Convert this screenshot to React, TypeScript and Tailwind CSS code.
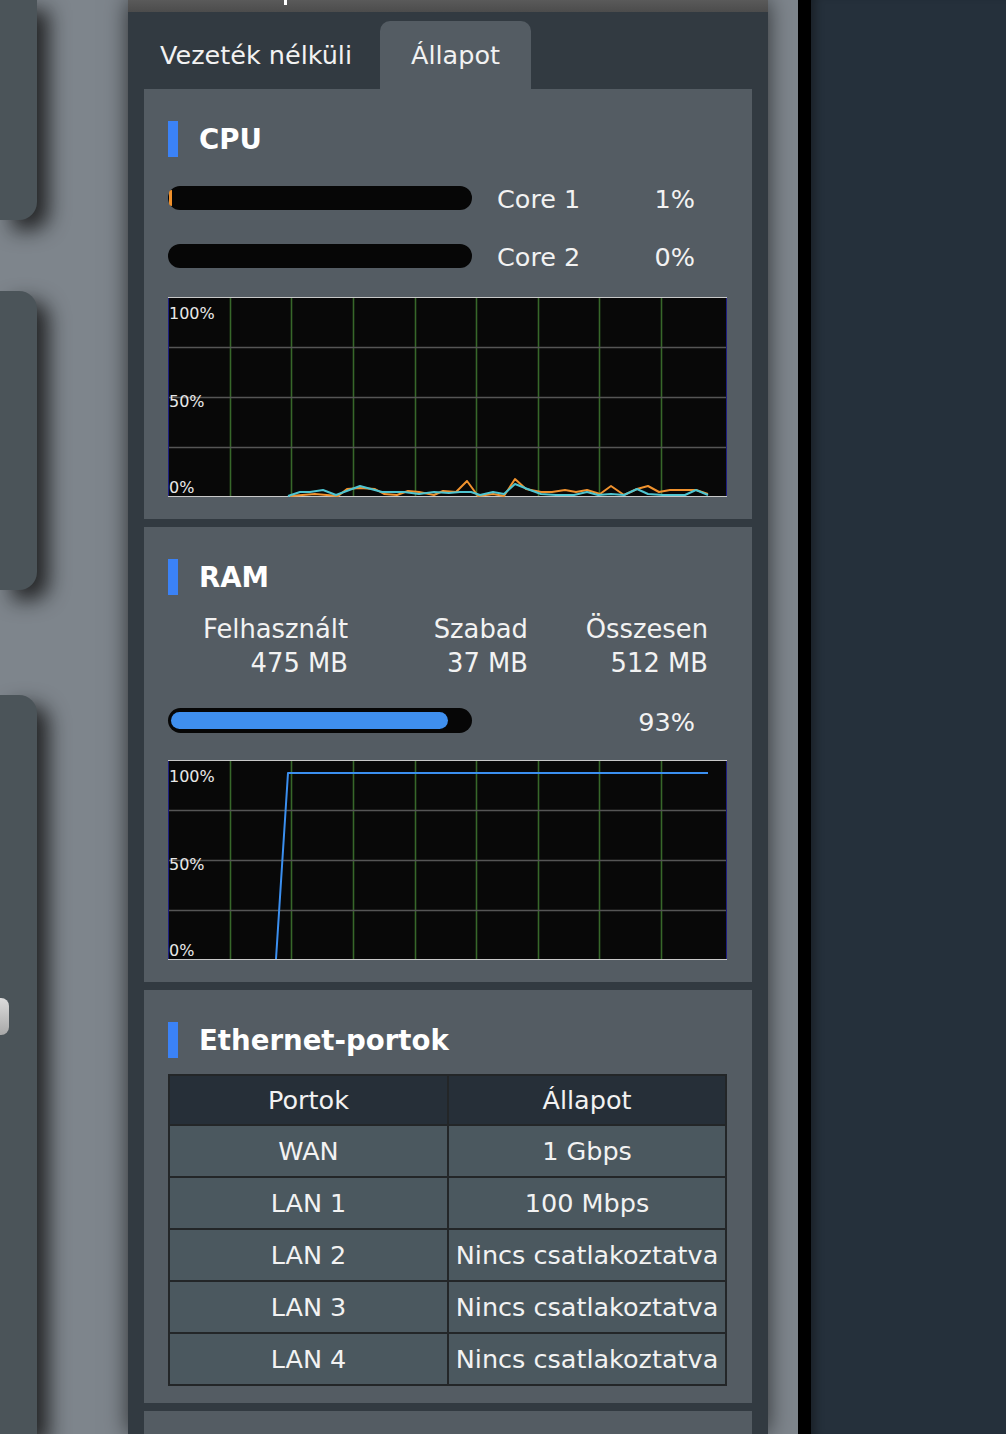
import React from 'react'

const FONT = { fontFamily: '"DejaVu Sans", Verdana, sans-serif' }

// wartości wykresów (współrzędne względem wykresu 559x200)
const cpuCyan: [number, number][] = [
  [120, 199], [132, 195], [142, 195], [155, 193], [168, 198], [192, 189], [214, 195], [236, 195],
  [251, 197], [266, 195], [281, 196], [292, 195], [303, 195], [312, 198], [325, 195], [336, 197],
  [347, 187], [362, 193], [373, 197], [388, 198], [406, 198], [419, 195], [430, 198], [443, 197],
  [456, 198], [469, 192], [480, 197], [495, 198], [517, 198], [528, 193], [540, 198],
]
const cpuOrange: [number, number][] = [
  [122, 199], [147, 197], [170, 199], [179, 192], [192, 191], [207, 192], [216, 197], [229, 198],
  [240, 194], [251, 195], [266, 198], [275, 194], [288, 195], [299, 184], [310, 199], [325, 197],
  [336, 199], [347, 182], [358, 192], [373, 195], [384, 195], [397, 193], [408, 195], [419, 193],
  [432, 197], [443, 189], [456, 198], [469, 192], [480, 189], [491, 195], [502, 193], [528, 193],
  [540, 197],
]
const ramLine: [number, number][] = [
  [108, 199], [120, 13], [540, 13],
]

const pts = (p: [number, number][]) => p.map(([x, y]) => `${x},${y}`).join(' ')

function Grafikon({ vonalak }: { vonalak: { pontok: [number, number][]; szin: string }[] }) {
  const fuggoleges = [62, 123, 185, 247, 308, 370, 431, 493]
  return (
    <svg width="559" height="200" viewBox="0 0 559 200" className="block">
      <rect x="0" y="0" width="559" height="200" fill="#080808" />
      {fuggoleges.map(x => (
        <line key={x} x1={x + 0.5} y1="0" x2={x + 0.5} y2="200" stroke="#37672a" strokeWidth="1.6" />
      ))}
      {[50, 100, 150].map(y => (
        <line key={y} x1="0" y1={y + 0.5} x2="559" y2={y + 0.5} stroke="#555555" strokeWidth="1.6" />
      ))}
      <line x1="0.5" y1="0" x2="0.5" y2="200" stroke="#1d1d80" />
      <line x1="558.5" y1="0" x2="558.5" y2="200" stroke="#1d1d80" />
      <line x1="0" y1="0.5" x2="559" y2="0.5" stroke="#c8c8c8" />
      <line x1="0" y1="199.5" x2="559" y2="199.5" stroke="#c8c8c8" />
      {vonalak.map((v, i) => (
        <polyline key={i} points={pts(v.pontok)} fill="none" stroke={v.szin} strokeWidth="2" strokeLinejoin="round" />
      ))}
      <text x="1" y="22" fill="#e8e8e8" fontSize="16" style={FONT}>100%</text>
      <text x="1" y="110" fill="#e8e8e8" fontSize="16" style={FONT}>50%</text>
      <text x="1" y="196" fill="#e8e8e8" fontSize="16" style={FONT}>0%</text>
    </svg>
  )
}

function Cim({ szoveg }: { szoveg: string }) {
  return (
    <div className="flex items-center h-[36px]">
      <div className="w-[10px] h-[36px] bg-[#3b82f6]" />
      <div className="ml-[21px] pt-[2px] text-[27.6px] font-bold text-white leading-none">{szoveg}</div>
    </div>
  )
}

function MagSor({ nev, ertek, toltes }: { nev: string; ertek: string; toltes: number }) {
  return (
    <div className="flex items-center h-[24px]">
      <div className="w-[304px] h-[24px] rounded-full bg-[#060606] flex items-center pl-[1px]">
        {toltes > 0 && <div className="h-[16px] bg-[#f0902a] rounded-l-sm" style={{ width: toltes }} />}
      </div>
      <div className="ml-[25px] pt-[4px] w-[120px] text-[25.5px] text-[#f2f2f2] leading-none">{nev}</div>
      <div className="w-[78px] pt-[4px] text-right text-[25.5px] text-[#f2f2f2] leading-none">{ertek}</div>
    </div>
  )
}

const portok = [
  ['WAN', '1 Gbps'],
  ['LAN 1', '100 Mbps'],
  ['LAN 2', 'Nincs csatlakoztatva'],
  ['LAN 3', 'Nincs csatlakoztatva'],
  ['LAN 4', 'Nincs csatlakoztatva'],
]

function BalKartya({ className, children }: { className: string; children?: React.ReactNode }) {
  return (
    <div className={`w-[37px] shrink-0 bg-[#4b5459] shadow-[12px_10px_20px_rgba(15,15,15,0.8)] ${className}`}>{children}</div>
  )
}

export default function App() {
  return (
    <div className="w-[1006px] h-[1434px] flex overflow-hidden bg-[#7e858c]" style={FONT}>
      {/* bal oldali kártyák */}
      <div className="w-[128px] flex flex-col shrink-0">
        <BalKartya className="h-[220px] rounded-br-[18px]" />
        <BalKartya className="mt-[71px] h-[299px] rounded-r-[18px]" />
        <BalKartya className="mt-[105px] flex-1 rounded-tr-[18px] pt-[303px]">
          <div className="w-[9px] h-[37px] rounded-r-[8px] bg-gradient-to-b from-[#dcdcdc] to-[#a8a8a8]" />
        </BalKartya>
      </div>

      {/* fő panel */}
      <div className="w-[640px] shrink-0 bg-[#323a41] flex flex-col shadow-[0_0_22px_rgba(0,0,0,0.65)] z-10">
        <div className="h-[12px] shrink-0 bg-gradient-to-b from-[#5a5a5a] to-[#4c4c4c] flex">
          <div className="ml-[156px] w-[3px] h-[5px] bg-white" />
        </div>
        <div className="flex shrink-0 pt-[9px] px-4 h-[77px]">
          <div className="w-[236px] h-[68px] flex items-center pl-4 text-[25.5px] text-[#f2f2f2]">Vezeték nélküli</div>
          <div className="w-[151px] h-[68px] flex items-center justify-center rounded-t-[10px] bg-[#545c63] text-[25.5px] text-[#f2f2f2]">
            Állapot
          </div>
        </div>

        <div className="flex flex-col shrink-0 gap-2 px-4">
          {/* CPU */}
          <div className="bg-[#545c63] pl-6 pt-[32px] pb-[22px]">
            <Cim szoveg="CPU" />
            <div className="mt-[29px]">
              <MagSor nev="Core 1" ertek="1%" toltes={3} />
            </div>
            <div className="mt-[34px]">
              <MagSor nev="Core 2" ertek="0%" toltes={0} />
            </div>
            <div className="mt-[29px]">
              <Grafikon
                vonalak={[
                  { pontok: cpuOrange, szin: '#f0922e' },
                  { pontok: cpuCyan, szin: '#4fc4d0' },
                ]}
              />
            </div>
          </div>

          {/* RAM */}
          <div className="bg-[#545c63] pl-6 pt-[32px] pb-[22px]">
            <Cim szoveg="RAM" />
            <div className="mt-[17px] grid grid-cols-[180px_180px_180px] text-[25.8px] text-[#f2f2f2] leading-[34px] text-right">
              <div>Felhasznált</div>
              <div>Szabad</div>
              <div>Összesen</div>
              <div>475 MB</div>
              <div>37 MB</div>
              <div>512 MB</div>
            </div>
            <div className="mt-[28px] flex items-center h-[25px]">
              <div className="w-[304px] h-[25px] rounded-full bg-[#060606] flex items-center px-[3px]">
                <div className="h-[17px] rounded-full bg-[#3f8fee]" style={{ width: '93%' }} />
              </div>
              <div className="ml-[25px] pt-[4px] w-[198px] text-right text-[25.5px] text-[#f2f2f2] leading-none">93%</div>
            </div>
            <div className="mt-[27px]">
              <Grafikon vonalak={[{ pontok: ramLine, szin: '#3b8ff0' }]} />
            </div>
          </div>

          {/* Ethernet */}
          <div className="bg-[#545c63] pl-6 pt-[32px] pb-[17px]">
            <Cim szoveg="Ethernet-portok" />
            <table className="mt-[16px] w-[559px] border-collapse border-2 border-[#232628] text-[25.5px] text-[#f2f2f2]">
              <thead>
                <tr className="bg-[#262f38] h-[50px]">
                  <th className="font-normal w-[279px] border-2 border-[#232628]">Portok</th>
                  <th className="font-normal border-2 border-[#232628]">Állapot</th>
                </tr>
              </thead>
              <tbody>
                {portok.map(([p, a]) => (
                  <tr key={p} className="bg-[#4b585f] h-[52px]">
                    <td className="text-center border-2 border-[#232628]">{p}</td>
                    <td className="text-center border-2 border-[#232628] whitespace-nowrap">{a}</td>
                  </tr>
                ))}
              </tbody>
            </table>
          </div>

          <div className="bg-[#545c63] h-[40px]" />
        </div>
      </div>

      <div className="w-[30px] shrink-0" />
      <div className="w-[13px] shrink-0 bg-black" />
      <div className="flex-1 bg-[#25303b] shadow-[inset_10px_0_10px_-6px_rgba(0,0,0,0.35)]" />
    </div>
  )
}
